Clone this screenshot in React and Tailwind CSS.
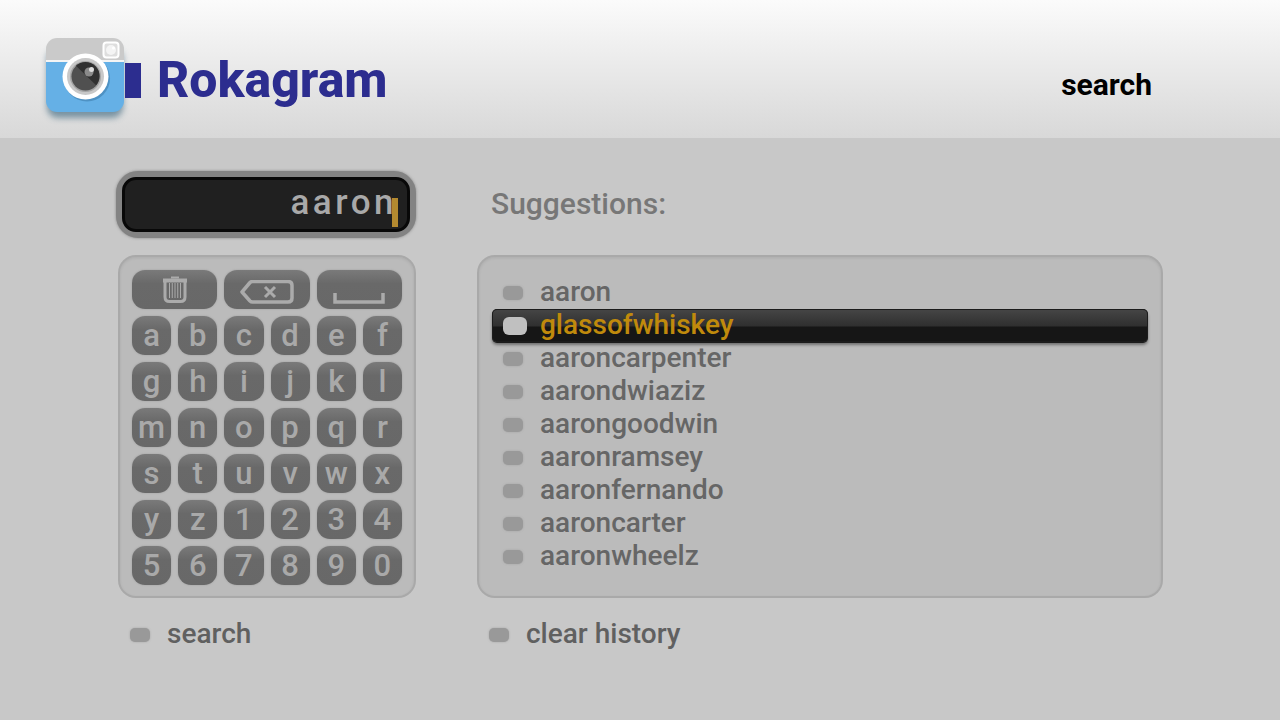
import { useState } from "react";

const KEYS = "abcdefghijklmnopqrstuvwxyz1234567890".split("");

const SUGGESTIONS = [
  "aaron",
  "glassofwhiskey",
  "aaroncarpenter",
  "aarondwiaziz",
  "aarongoodwin",
  "aaronramsey",
  "aaronfernando",
  "aaroncarter",
  "aaronwheelz",
];

const PANEL =
  "rounded-[18px] border-2 border-[#a9a9a9] bg-[#bbbbbb] shadow-[inset_0_1px_3px_rgba(0,0,0,0.08)]";
const KEY =
  "flex h-[39px] items-center justify-center rounded-[13px] bg-linear-to-b from-[#7a7a7a] via-[#696969] via-35% to-[#686868] text-[#a9a9a9] shadow-[0_0_2px_rgba(110,110,110,0.4)]";

function CameraLogo() {
  return (
    <svg className="h-[90px] w-[96px] shrink-0 overflow-visible" viewBox="0 0 96 90" aria-hidden="true">
      <defs>
        <filter id="drop" x="-20%" y="-20%" width="140%" height="150%">
          <feGaussianBlur stdDeviation="3" />
        </filter>
        <clipPath id="body">
          <rect x="0" y="2" width="78" height="74" rx="11" />
        </clipPath>
        <clipPath id="lens">
          <circle cx="39.500" cy="40" r="14" />
        </clipPath>
      </defs>
      <rect x="1" y="12" width="76" height="70" rx="11" fill="#4d7287" opacity="0.7" filter="url(#drop)" />
      <g clipPath="url(#body)">
        <rect x="0" y="0" width="78" height="26" fill="#cacaca" />
        <rect x="0" y="24" width="78" height="2" fill="#f4f4f4" />
        <rect x="0" y="26" width="78" height="51" fill="#65b0e6" />
      </g>
      <rect x="57.500" y="6.500" width="15" height="15" rx="3" fill="#dedede" stroke="#ffffff" strokeWidth="2" />
      <circle cx="65" cy="14" r="5" fill="#f4f4f4" />
      <circle cx="67.500" cy="12" r="1.500" fill="#ffffff" />
      <circle cx="41" cy="42.500" r="23" fill="#3f7fad" opacity="0.6" />
      <circle cx="39.500" cy="40.500" r="23" fill="#ffffff" />
      <circle cx="39.500" cy="40.500" r="18.500" fill="#c8c8c8" />
      <circle cx="39.500" cy="40.500" r="15.500" fill="#a4a4a4" />
      <circle cx="39.500" cy="40.500" r="14" fill="#505050" />
      <path d="M26 26 L54 53 L60 20 Z" fill="#303030" clipPath="url(#lens)" />
      <circle cx="43" cy="36" r="4.500" fill="#8a8a8a" />
      <circle cx="45.500" cy="33.500" r="2.500" fill="#dddddd" />
      <rect x="79" y="27" width="16" height="35" fill="#2c2d8f" />
    </svg>
  );
}

function TrashIcon() {
  return (
    <svg className="h-[28px] w-[26px]" viewBox="0 0 26 28" fill="none" stroke="#ababab" aria-hidden="true">
      <path d="M1 4.500H25" strokeWidth="4" />
      <path d="M9 1.500H17" strokeWidth="2" />
      <path d="M3 6V21Q3 25.500 7.500 25.500H18.500Q23 25.500 23 21V6" strokeWidth="3" />
      <path d="M7.500 7V22M10.250 7V22M13 7V22M15.750 7V22M18.500 7V22" strokeWidth="1" />
    </svg>
  );
}

function BackspaceIcon() {
  return (
    <svg className="mt-1 h-[24px] w-[54px]" viewBox="0 0 54 24" fill="none" stroke="#ababab" aria-hidden="true">
      <path
        d="M2 12L10 2.500Q11 1.500 12.500 1.500H48Q52 1.500 52 5.500V18Q52 22 48 22H12.500Q11 22 10 21Z"
        strokeWidth="3.500"
        strokeLinejoin="round"
      />
      <path d="M25 7L35 17M35 7L25 17" strokeWidth="3" />
    </svg>
  );
}

function SpaceIcon() {
  return (
    <svg className="mt-4 h-[12px] w-[52px]" viewBox="0 0 52 12" fill="none" stroke="#ababab" aria-hidden="true">
      <path d="M2 1V10H50V1" strokeWidth="3.500" />
    </svg>
  );
}

function Pip({ selected }) {
  return (
    <span className="flex w-[24px] shrink-0">
      <span
        className={
          selected
            ? "h-[18px] w-[24px] rounded-[6px] bg-[#c0c0c0]"
            : "h-[14px] w-[20px] rounded-[5px] bg-[#999999] shadow-[0_0_2px_rgba(153,153,153,0.8)]"
        }
      />
    </span>
  );
}

function ActionButton({ children, className }) {
  return (
    <button
      type="button"
      className={`flex items-center gap-[13px] text-[28px] leading-[33px] text-[#606060] ${className}`}
    >
      <Pip />
      <span className="pb-[2px]">{children}</span>
    </button>
  );
}

export default function App() {
  const [query, setQuery] = useState("aaron");
  const [selected, setSelected] = useState("glassofwhiskey");

  return (
    <div className="min-h-screen bg-[#c8c8c8] font-['Roboto',sans-serif] font-medium">
      <header className="flex h-[138px] items-center justify-between bg-linear-to-b from-[#fbfbfb] to-[#d8d8d8] pr-[128px] pl-[46px]">
        <div className="flex items-center gap-[15px] pt-[24px]">
          <CameraLogo />
          <span className="pb-[2px] text-[50px] leading-[60px] font-extrabold text-[#2c2d8f]">Rokagram</span>
        </div>
        <h1 className="pt-[32px] text-[30px] leading-[36px] font-bold text-black">search</h1>
      </header>

      <main className="flex gap-[61px] pt-[33px] pr-[117px] pl-[116px]">
        <section className="flex w-[300px] shrink-0 flex-col">
          <div className="relative h-[67px] rounded-[22px] border-[6px] border-[#838383] bg-[#838383] shadow-[0_0_3px_rgba(90,90,90,0.6)]">
            <input
              aria-label="Search query"
              value={query}
              onChange={(e) => setQuery(e.target.value)}
              className="h-full w-full rounded-[14px] border-[3px] border-[#080808] bg-[#202020] pr-[10px] pb-[4px] text-right text-[35px] tracking-widest text-[#a9a9a9] outline-none"
            />
            <span className="absolute right-[12px] bottom-[5px] h-[29px] w-[6px] bg-[#b48a30]" />
          </div>

          <div className={`mt-[17px] ml-[2px] flex h-[343px] flex-col gap-[7px] px-[12px] pt-[13px] ${PANEL}`}>
            <div className="grid grid-cols-3 gap-[7px]">
              <button type="button" aria-label="Clear" onClick={() => setQuery("")} className={KEY}>
                <TrashIcon />
              </button>
              <button
                type="button"
                aria-label="Backspace"
                onClick={() => setQuery(query.slice(0, -1))}
                className={KEY}
              >
                <BackspaceIcon />
              </button>
              <button type="button" aria-label="Space" onClick={() => setQuery(query + " ")} className={KEY}>
                <SpaceIcon />
              </button>
            </div>
            <div className="grid grid-cols-6 gap-[7px]">
              {KEYS.map((k) => (
                <button
                  key={k}
                  type="button"
                  onClick={() => setQuery(query + k)}
                  className={`text-[31px] leading-[39px] ${KEY}`}
                >
                  {k}
                </button>
              ))}
            </div>
          </div>

          <ActionButton className="mt-[19px] pl-[14px]">search</ActionButton>
        </section>

        <section className="flex min-w-0 flex-1 flex-col">
          <h2 className="h-[67px] pl-[14px] text-[30px] leading-[66px] text-[#777777]">Suggestions:</h2>
          <ul className={`mt-[17px] h-[343px] px-[13px] pt-[19px] ${PANEL}`}>
            {SUGGESTIONS.map((name) => {
              const active = name === selected;
              return (
                <li key={name}>
                  <button
                    type="button"
                    onClick={() => setSelected(name)}
                    className={`flex h-[33px] w-full items-center gap-[13px] pl-[11px] text-[28px] leading-[30px] ${
                      active
                        ? "rounded-[5px] bg-linear-to-b from-[#444444] from-5% via-[#303030] via-50% to-[#161616] to-56% text-[#c08a0c] shadow-[inset_0_0_0_1px_#1c1c1c,0_1px_0_#1c1c1c,0_3px_3px_rgba(0,0,0,0.4)]"
                        : "text-[#666666]"
                    }`}
                  >
                    <Pip selected={active} />
                    <span className="pb-[2px]">{name}</span>
                  </button>
                </li>
              );
            })}
          </ul>
          <ActionButton className="mt-[19px] pl-[12px]">clear history</ActionButton>
        </section>
      </main>
    </div>
  );
}
